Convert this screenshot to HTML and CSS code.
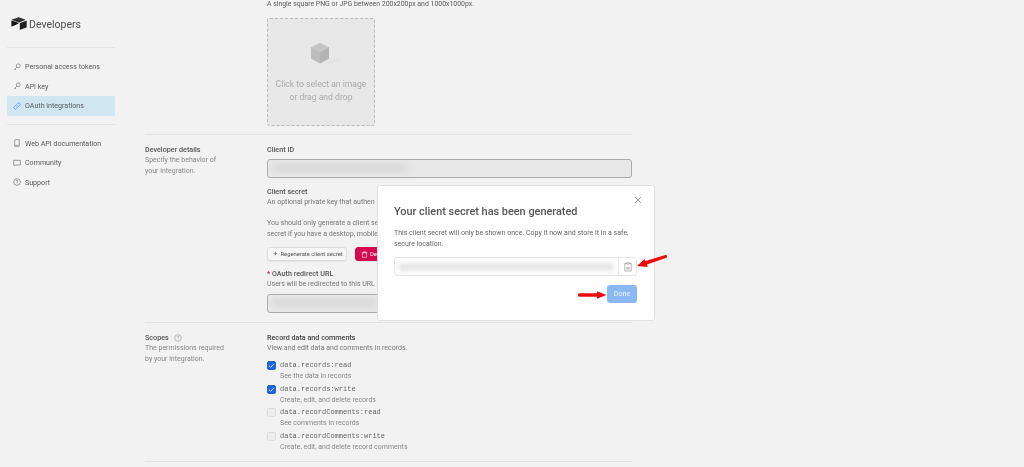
FILE: index.html
```html
<!DOCTYPE html>
<html lang="en">
<head>
<meta charset="utf-8">
<title>Developers</title>
<link rel="stylesheet" href="styles.css">
</head>
<body>
<div class="page">
  <aside class="sidebar">
    <div class="brand">
      <svg class="logo" viewBox="0 0 16 13" width="16" height="13"><path d="M7 .4 1 2.600c-.3.100-.3.400 0 .5l6.200 2.300c.4.100.7.100 1 0l6-2.300c.3-.1.3-.4 0-.5L8.300.4C7.800.2 7.400.2 7 .4z" fill="#333"/><path d="M8.800 6.500v6c0 .3.200.4.500.3l6.100-2.400c.2-.1.300-.2.300-.4v-6c0-.3-.2-.4-.5-.3L9 6.100c-.1.100-.2.200-.2.400z" fill="#222"/><path d="M7.500 6.600 5.600 7.500 1 9.600c-.3.100-.6-.1-.6-.4V3.900c0-.3.300-.4.500-.3l6.500 2.500c.2.100.2.400.1.500z" fill="#111"/></svg>
      <span class="brand-name">Developers</span>
    </div>
    <nav class="nav nav-first">
      <a class="nav-item"><svg class="ico" viewBox="0 0 12 12"><circle cx="7.800" cy="4.200" r="2.900"/><path d="M5.700 6.300 1.500 10.500M3 9l1.200 1.200"/></svg>Personal access tokens</a>
      <a class="nav-item"><svg class="ico" viewBox="0 0 12 12"><circle cx="7.800" cy="4.200" r="2.900"/><path d="M5.700 6.300 1.500 10.500M3 9l1.200 1.200"/></svg>API key</a>
      <a class="nav-item active"><svg class="ico ico-link" viewBox="0 0 12 12"><path d="M5 7a2 2 0 0 0 3 0l2-2a2 2 0 0 0-3-3L6 3"/><path d="M7 5a2 2 0 0 0-3 0L2 7a2 2 0 0 0 3 3l1-1"/></svg>OAuth integrations</a>
    </nav>
    <nav class="nav nav-second">
      <a class="nav-item"><svg class="ico" viewBox="0 0 12 12"><path d="M2.500 9.500V2a1 1 0 0 1 1-1h6v8.500h-6a1 1 0 0 0 0 2h6"/></svg>Web API documentation</a>
      <a class="nav-item"><svg class="ico" viewBox="0 0 12 12"><path d="M1 2h10v7H4l-2 1.500V9H1z"/></svg>Community</a>
      <a class="nav-item"><svg class="ico" viewBox="0 0 12 12"><circle cx="6" cy="6" r="5"/><path d="M4.600 4.700a1.400 1.400 0 1 1 2 1.300c-.4.200-.6.500-.6 1M6 8.300v.6"/></svg>Support</a>
    </nav>
  </aside>

  <main class="main">
    <section class="logo-section">
      <p class="hint">A single square PNG or JPG between 200x200px and 1000x1000px.</p>
      <div class="dropzone">
        <svg class="cube" viewBox="0 0 28 28" width="28" height="28"><path d="M16 20l5-5 7 2-9 5z" fill="#e2e2e2"/><path d="M9 0l9 4.500v11L9 20.500 0 15.500v-11z" fill="#bdbdbd"/><path d="M9 0l9 4.500-9 5-9-5z" fill="#c6c6c6"/><path d="M9 9.500l9-5v11l-9 5z" fill="#b4b4b4"/></svg>
        <span>Click to select an image<br>or drag and drop</span>
      </div>
    </section>

    <section class="row details">
      <div class="row-label">
        <h3>Developer details</h3>
        <p>Specify the behavior of<br>your integration.</p>
      </div>
      <div class="row-body">
        <h4>Client ID</h4>
        <div class="field field-id"><span class="blur blur-id"></span></div>
        <h4 class="secret-title">Client secret</h4>
        <p class="line">An optional private key that authen</p>
        <p class="line gap-top">You should only generate a client se</p>
        <p class="line">secret if you have a desktop, mobile</p>
        <div class="btns">
          <button class="btn"><span class="plus">+</span>Regenerate client secret</button>
          <button class="btn btn-red"><svg class="trash" viewBox="0 0 10 10" width="7" height="7"><path d="M2 2.500h6V9H2zM1 2.500h8M3.800 2.500V1h2.400v1.500"/></svg>Delete</button>
        </div>
        <h4 class="oauth-title"><span class="req">*</span> OAuth redirect URL</h4>
        <p class="line">Users will be redirected to this URL</p>
        <div class="field field-url"><span class="blur blur-url"></span></div>
      </div>
    </section>

    <section class="row scopes">
      <div class="row-label">
        <h3>Scopes <svg class="help" viewBox="0 0 12 12" width="8" height="8"><circle cx="6" cy="6" r="5"/><path d="M4.600 4.700a1.400 1.400 0 1 1 2 1.300c-.4.200-.6.500-.6 1M6 8.300v.6"/></svg></h3>
        <p>The permissions required<br>by your integration.</p>
      </div>
      <div class="row-body">
        <h4 class="dark">Record data and comments</h4>
        <p class="line">View and edit data and comments in records.</p>
        <div class="scope-list">
          <div class="scope"><span class="check on"><svg viewBox="0 0 10 10" width="9" height="9"><path d="M2.300 5.300 4.200 7 7.800 3"/></svg></span><div><code>data.records:read</code><p>See the data in records</p></div></div>
          <div class="scope"><span class="check on"><svg viewBox="0 0 10 10" width="9" height="9"><path d="M2.300 5.300 4.200 7 7.800 3"/></svg></span><div><code>data.records:write</code><p>Create, edit, and delete records</p></div></div>
          <div class="scope"><span class="check"></span><div><code>data.recordComments:read</code><p>See comments in records</p></div></div>
          <div class="scope"><span class="check"></span><div><code>data.recordComments:write</code><p>Create, edit, and delete record comments</p></div></div>
        </div>
      </div>
    </section>
  </main>
</div>

<div class="modal">
  <button class="close" aria-label="Close"><svg viewBox="0 0 8 8" width="8" height="8"><path d="M1 1l6 6M7 1 1 7"/></svg></button>
  <h2>Your client secret has been generated</h2>
  <p>This client secret will only be shown once. Copy it now and store it in a safe,<br>secure location.</p>
  <div class="secret">
    <div class="secret-value"><span class="blur blur-secret"></span></div>
    <div class="copy"><svg viewBox="0 0 10 12" width="8" height="10"><path d="M3 1.500H1v9.500h8V1.500H7M3 .8h4v1.600H3zM3.500 6.500h3v2h-3z"/></svg></div>
  </div>
  <div class="modal-foot"><button class="done">Done</button></div>
</div>

<svg class="arrow arrow-copy" viewBox="0 0 30 12" width="30" height="12"><path d="M28.500 0a1.500 1.500 0 0 1 .9 2.800L10 9.500l.6 2.400L0 11l7.500-7 .9 2.100z" fill="#ee0b0b"/></svg>
<svg class="arrow arrow-done" viewBox="0 0 29 8" width="29" height="8"><path d="M1.700 2.200H19V.2L28.500 4 19 7.800V5.800H1.700a1.800 1.800 0 0 1 0-3.600z" fill="#ee0b0b"/></svg>
</body>
</html>
```
FILE: styles.css
```css
* { box-sizing: border-box; }
html, body { margin: 0; height: 467px; overflow: hidden; }
body {
  background: #f2f2f2;
  color: #555;
  font-family: Roboto, "Open Sans", sans-serif;
  font-size: 7px;
  line-height: 11px;
  position: relative;
}
h2, h3, h4, p { margin: 0; }

.page { display: flex; height: 467px; filter: blur(.3px); }

.sidebar { width: 145px; flex: none; padding: 0 30px 0 7px; }
.brand { display: flex; align-items: center; gap: 2px; height: 48px; padding: 1px 0 0 4px; border-bottom: 1px solid #e4e4e4; }
.logo { display: block; margin-top: -1px; }
.brand-name { font-size: 10.500px; color: #4f4f4f; }
.nav { display: flex; flex-direction: column; }
.nav-first { padding: 9px 0 8px; border-bottom: 1px solid #e4e4e4; }
.nav-second { padding-top: 9px; }
.nav-item { display: flex; align-items: center; gap: 4px; height: 19.500px; padding-left: 6px; font-size: 7.100px; color: #5a5a5a; white-space: nowrap; }
.nav-item.active { background: #d0e7f2; border-radius: 1px; }
.ico { width: 8px; height: 8px; flex: none; fill: none; stroke: #666; stroke-width: .9; }
.ico-link { stroke: #2d7ff9; }

.main { width: 487px; flex: none; }
.logo-section { height: 135px; border-bottom: 1px solid #e3e3e3; padding-left: 122px; }
.hint { font-size: 6.900px; line-height: 8px; color: #5c5c5c; white-space: nowrap; }
.dropzone {
  width: 108px; height: 108px; margin-top: 10px;
  display: flex; flex-direction: column; align-items: center;
  padding-top: 24px;
  background: #e8e8e8;
  border: 1px dashed #bbb;
  border-radius: 3px;
  color: #aaa;
  font-size: 8.600px;
  line-height: 13px;
  text-align: center;
}
.cube { display: block; margin: 0 0 6.500px 8px; }

.row { display: flex; border-bottom: 1px solid #e3e3e3; }
.row-label { width: 122px; flex: none; }
.row-label h3 { font-size: 7.200px; line-height: 11px; font-weight: 500; color: #555; display: flex; align-items: center; gap: 5px; }
.help { fill: none; stroke: #888; stroke-width: .8; }
.row-label p { color: #888; font-size: 7px; line-height: 11px; }
.row-body { flex: 1; min-width: 0; }
.row-body h4 { font-size: 7.200px; line-height: 11px; font-weight: 500; color: #555; }
.row-body h4.dark { color: #444; }
.line { font-size: 7px; line-height: 11px; color: #777; white-space: nowrap; }
.gap-top { margin-top: 10px; }

.details { height: 188px; padding-top: 9px; }
.field { height: 19px; border: 1px solid #aaa; border-radius: 3px; background: #e8e8e8; padding: 4px; overflow: hidden; }
.field-id { margin-top: 4px; }
.field-url { margin-top: 4px; }
.blur { display: block; height: 8px; background: #d8d8d8; filter: blur(3px); }
.blur-id { width: 135px; }
.blur-url { width: 105px; }
.secret-title { margin-top: 8px; }
.btns { display: flex; gap: 8px; margin-top: 7px; }
.btn {
  height: 14px; width: 80px; padding: 0 0 0 5px; border: 1px solid #ddd; border-radius: 3px;
  background: #f6f6f6; color: #555; font: 400 5.800px/12px Roboto, sans-serif;
  white-space: nowrap; display: flex; align-items: center; box-shadow: 0 1px 1px rgba(0,0,0,.06);
}
.plus { font-size: 8px; margin-right: 3px; }
.btn-red { background: #d5094e; border-color: #d5094e; color: #fff; gap: 2px; }
.trash { fill: none; stroke: #fff; stroke-width: .8; }
.oauth-title { margin-top: 7px; }
.req { color: #d5094e; }

.scopes { height: 139px; padding-top: 9px; }
.scope-list { margin-top: 5px; display: flex; flex-direction: column; }
.scope { display: flex; gap: 4px; height: 23.700px; }
.scope code { display: block; font: 7px/10px "Liberation Mono", monospace; color: #666; padding-top: 1px; white-space: nowrap; }
.scope p { font-size: 7px; line-height: 12px; color: #888; white-space: nowrap; }
.check { width: 9px; height: 9px; flex: none; margin-top: 2px; border: 1px solid #ddd; border-radius: 2px; background: #eee; display: block; }
.check svg { display: block; margin: -1px; fill: none; stroke: #cfe0fa; stroke-width: 1; }
.check.on { background: #1f63d6; border-color: #1f63d6; }

.modal {
  position: absolute; left: 377px; top: 185px;
  width: 278px; height: 136px;
  background: #fff;
  border: 1px solid #e1e1e1;
  border-radius: 3px;
  padding: 19px 17px 0 16px;
  filter: blur(.3px);
}
.modal h2 { font-size: 10.900px; line-height: 14px; font-weight: 500; color: #555; }
.modal p { margin-top: 9px; font-size: 7px; line-height: 11px; color: #666; white-space: nowrap; }
.close { position: absolute; right: 12px; top: 10px; width: 8px; height: 8px; padding: 0; border: 0; background: none; }
.close svg { display: block; fill: none; stroke: #888; stroke-width: .8; }
.secret { display: flex; height: 19px; margin-top: 7px; border: 1px solid #e6e6e6; border-radius: 3px; }
.secret-value { flex: 1; padding: 5px 4px; overflow: hidden; }
.blur-secret { width: 100%; background: #e6e6e6; filter: blur(2px); }
.copy { width: 18px; flex: none; border-left: 1px solid #e6e6e6; display: flex; align-items: center; justify-content: center; }
.copy svg { fill: none; stroke: #888; stroke-width: .8; }
.modal-foot { display: flex; justify-content: flex-end; margin-top: 9px; }
.done { width: 30px; height: 18px; padding: 0; border: 0; border-radius: 3px; background: #8ab8f4; color: #dbe9fb; font: 500 7.200px/18px Roboto, sans-serif; }

.arrow { position: absolute; display: block; }
.arrow-copy { left: 637px; top: 255px; }
.arrow-done { left: 578px; top: 291px; }
```
